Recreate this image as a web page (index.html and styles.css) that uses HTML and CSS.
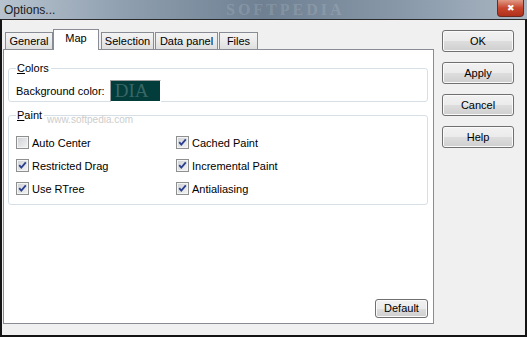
FILE: index.html
```html
<!DOCTYPE html>
<html lang="en">
<head>
<meta charset="UTF-8">
<title>Options...</title>
<link rel="stylesheet" href="styles.css">
</head>
<body>
<div class="titlebar">
    <span class="title">Options...</span>
    <span class="mark">SOFTPEDIA</span>
    <span class="close">&#x2716;</span>
</div>
<div class="frame">
    <div class="tabs-col">
        <div class="tabs">
            <div class="tab t-general">General</div>
            <div class="tab sel t-map">Map</div>
            <div class="tab t-sel">Selection</div>
            <div class="tab t-data">Data panel</div>
            <div class="tab t-files">Files</div>
        </div>
        <div class="panel">
            <fieldset class="group colors">
                <legend><u>C</u>olors</legend>
                <div class="color-row">
                    <span>Background color:</span>
                    <span class="swatch">DIA</span>
                </div>
            </fieldset>
            <fieldset class="group paint">
                <legend><u>P</u>aint</legend>
                <span class="wm">www.softpedia.com</span>
                <div class="checks">
                    <label class="chk"><span class="box"></span>Auto Center</label>
                    <label class="chk"><span class="box on"><svg viewBox="0 0 11 11"><path d="M2.2 5.2 L4.3 7.6 L8.8 2.4" /></svg></span>Cached Paint</label>
                    <label class="chk"><span class="box on"><svg viewBox="0 0 11 11"><path d="M2.2 5.2 L4.3 7.6 L8.8 2.4" /></svg></span>Restricted Drag</label>
                    <label class="chk"><span class="box on"><svg viewBox="0 0 11 11"><path d="M2.2 5.2 L4.3 7.6 L8.8 2.4" /></svg></span>Incremental Paint</label>
                    <label class="chk"><span class="box on"><svg viewBox="0 0 11 11"><path d="M2.2 5.2 L4.3 7.6 L8.8 2.4" /></svg></span>Use RTree</label>
                    <label class="chk"><span class="box on"><svg viewBox="0 0 11 11"><path d="M2.2 5.2 L4.3 7.6 L8.8 2.4" /></svg></span>Antialiasing</label>
                </div>
            </fieldset>
            <div class="btn default">Default</div>
        </div>
    </div>
    <div class="btn-col">
        <div class="btn">OK</div>
        <div class="btn">Apply</div>
        <div class="btn">Cancel</div>
        <div class="btn">Help</div>
    </div>
</div>
</body>
</html>
```

FILE: styles.css
```css
body {
    margin: 0;
    width: 527px;
    height: 337px;
    background: #e9edf1;
    font-family: "Liberation Sans", Arial, sans-serif;
    font-size: 11px;
    color: #000;
    overflow: hidden;
}
.titlebar {
    position: relative;
    height: 19px;
    display: flex;
    align-items: center;
    background: linear-gradient(90deg, #b7c3cf 0%, #8d9dae 25%, #6e8092 50%, #8797a8 75%, #a9b6c3 100%);
}
.title {
    margin-left: 4px;
    font-family: "Liberation Sans", Arial, sans-serif;
    font-size: 12px;
    color: #1c1c1c;
}
.mark {
    position: absolute;
    left: 226px;
    top: 1px;
    font-family: "Liberation Serif", serif;
    font-size: 16px;
    line-height: 17px;
    font-weight: bold;
    letter-spacing: 3px;
    color: rgba(255, 255, 255, 0.14);
}
.close {
    position: absolute;
    right: 3px;
    top: 0;
    width: 27px;
    height: 17px;
    border: 1px solid #6e2a20;
    border-top: 0;
    border-radius: 0 0 4px 4px;
    background: linear-gradient(#e09a84, #c8462e 50%, #b0301a);
    color: #fff;
    font-size: 9px;
    text-align: center;
    line-height: 16px;
    box-sizing: border-box;
}
.frame {
    display: flex;
    height: 318px;
    box-sizing: border-box;
    background: #f0f0f0;
    border: 2px solid #141414;
    border-top: 1px solid #2a2a2a;
    padding: 9px 0 0 1px;
}
.tabs-col {
    width: 431px;
    display: flex;
    flex-direction: column;
}
.tabs {
    display: flex;
    align-items: flex-end;
    height: 20px;
    padding-left: 2px;
}
.tab {
    height: 17px;
    box-sizing: border-box;
    border: 1px solid #898c95;
    border-bottom: 0;
    background: linear-gradient(#f3f3f3, #ebebeb 50%, #dedede);
    text-align: center;
    line-height: 16px;
    margin-right: 1px;
}
.tab.sel {
    position: relative;
    z-index: 1;
    height: 21px;
    margin: 0 1px -1px -1px;
    background: #fff;
    line-height: 16px;
}
.t-general { width: 48px; }
.t-map { width: 46px; }
.t-sel { width: 53px; margin-left: 1px; }
.t-data { width: 63px; margin-right: 1px; }
.t-files { width: 39px; }
.panel {
    height: 275px;
    box-sizing: border-box;
    background: #fff;
    border: 1px solid #898c95;
    display: flex;
    flex-direction: column;
    padding: 0 5px 5px 4px;
}
.group {
    position: relative;
    margin: 0;
    border: 1px solid #d5dfe5;
    border-radius: 3px;
    padding: 0 0 0 7px;
    min-width: 0;
}
.group legend {
    padding: 0 2px 0 1px;
    margin-left: 0;
    line-height: 13px;
}
.colors {
    margin-top: 12px;
    height: 40px;
    box-sizing: border-box;
}
.color-row {
    display: flex;
    align-items: center;
    margin-top: 5px;
}
.swatch {
    margin-left: 5px;
    width: 51px;
    height: 22px;
    box-sizing: border-box;
    border: 1px solid;
    border-color: #a0a0a0 #fff #fff #a0a0a0;
    background: #033d3b;
    font-family: "Liberation Serif", serif;
    font-size: 19px;
    line-height: 20px;
    color: rgba(255, 255, 255, 0.22);
    text-indent: 4px;
    overflow: hidden;
}
.paint {
    margin-top: 7px;
    padding: 9px 0 4px 7px;
}
.wm {
    position: absolute;
    left: 38px;
    top: -8px;
    font-size: 10px;
    color: #cdcdcd;
}
.checks {
    display: grid;
    grid-template-columns: 160px 1fr;
}
.chk {
    display: flex;
    align-items: center;
    height: 23px;
}
.box {
    width: 13px;
    height: 13px;
    box-sizing: border-box;
    border: 1px solid #8e8f8f;
    margin-right: 3px;
    background: linear-gradient(135deg, #cdd0d4, #f4f4f4);
    box-shadow: inset 0 0 0 1px #f4f4f4;
    display: flex;
}
.box svg {
    width: 11px;
    height: 11px;
    fill: none;
    stroke: #2a3f8e;
    stroke-width: 1.8;
}
.btn-col {
    margin-left: 8px;
    padding-top: 1px;
    display: flex;
    flex-direction: column;
    gap: 10px;
}
.btn {
    width: 72px;
    height: 22px;
    box-sizing: border-box;
    border: 1px solid #707070;
    border-radius: 3px;
    background: linear-gradient(#f2f2f2, #ebebeb 50%, #dddddd 51%, #cfcfcf);
    box-shadow: inset 0 0 0 1px #fafafa;
    text-align: center;
    line-height: 20px;
}
.btn.default {
    margin-top: auto;
    align-self: flex-end;
    width: 53px;
    height: 19px;
    line-height: 17px;
}
```
